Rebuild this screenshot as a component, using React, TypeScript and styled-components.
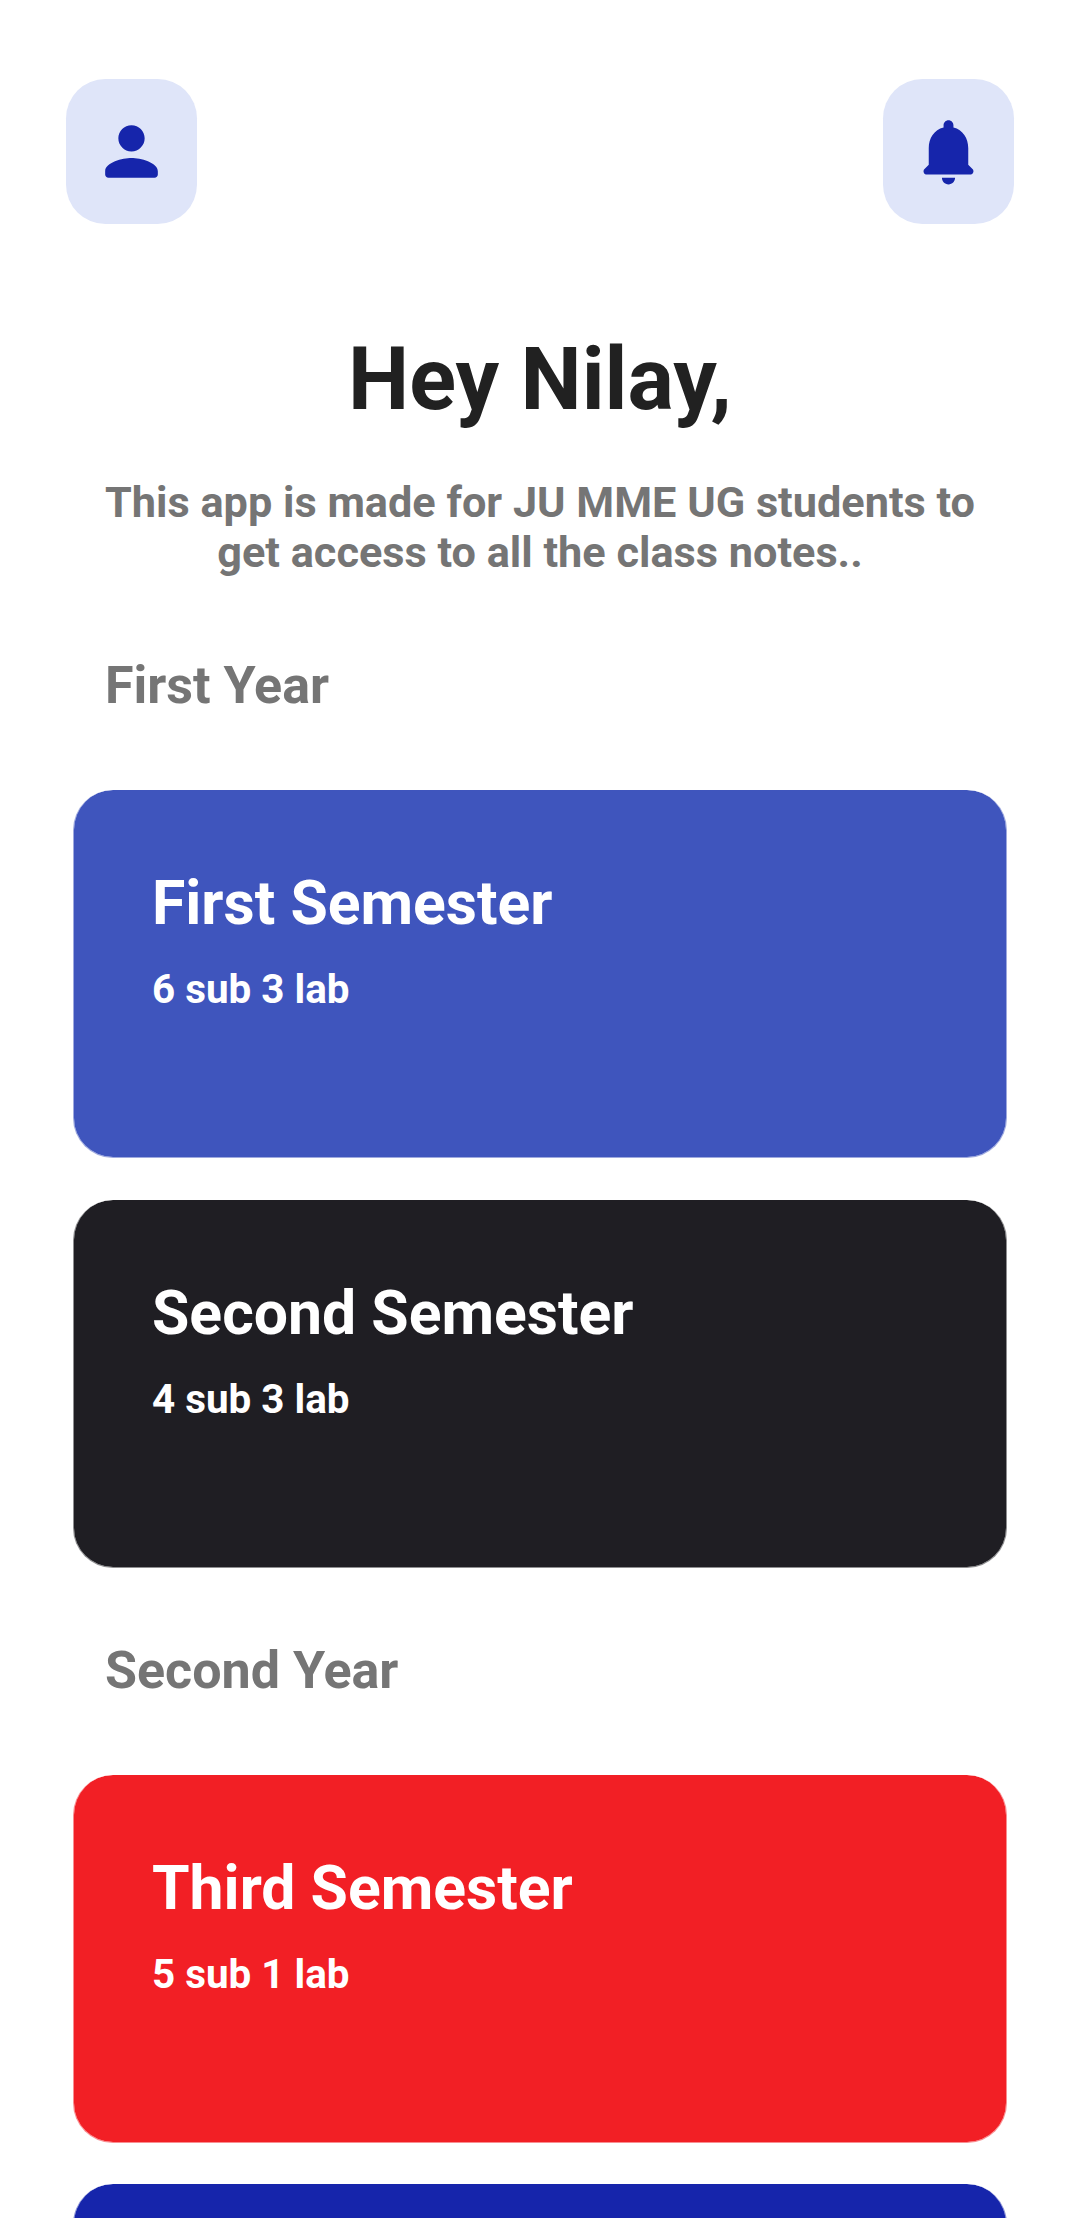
import React from 'react';
import styled, { createGlobalStyle } from 'styled-components';

const Global = createGlobalStyle`
  * { box-sizing: border-box; }
  body { margin: 0; background: #fff; font-family: Roboto, sans-serif; }
`;
const Screen = styled.main`
  width: 1080px;
  height: 2218px;
  overflow: hidden;
  display: flex;
  flex-direction: column;
  background: #fff;
`;
const TopBar = styled.header`
  display: flex;
  justify-content: space-between;
  padding: 79px 66px 0;
`;
const IconButton = styled.button`
  width: 131px;
  height: 145px;
  padding: 0;
  border: 0;
  border-radius: 39.4px;
  background: #dfe5f9;
  color: #1625ab;
  display: flex;
  align-items: center;
  justify-content: center;
`;
const Greeting = styled.h1`
  margin: 104px 0 0;
  font-size: 86.625px;
  line-height: 103px;
  font-weight: 700;
  color: #212121;
  text-align: center;
`;
const Intro = styled.p`
  margin: 47px 90px 0;
  font-size: 43.25px;
  line-height: 50px;
  font-weight: 700;
  color: #757575;
  text-align: center;
`;
const YearTitle = styled.h2<{ $top: number }>`
  margin: ${p => p.$top}px 0 0 105px;
  font-size: 52px;
  line-height: 62px;
  font-weight: 700;
  color: #757575;
`;
const Cards = styled.div<{ $gap: number }>`
  display: flex;
  flex-direction: column;
  gap: ${p => p.$gap}px;
  padding: 73px 73px 0;
`;
const Card = styled.section<{ $color: string }>`
  height: 368px;
  flex: none;
  border: 1px solid ${p => p.$color}80;
  border-top: 0;
  border-radius: 40px;
  background: ${p => p.$color};
  background-clip: padding-box;
  color: #fff;
  padding: 78px 78px 0;
`;
const CardTitle = styled.h3`
  margin: 0;
  font-size: 60.7px;
  line-height: 72px;
  font-weight: 700;
`;
const CardMeta = styled.p`
  margin: 26px 0 0;
  font-size: 40.4px;
  line-height: 48px;
  font-weight: 700;
`;

const years = [
  { title: 'First Year', top: 77, gap: 42, semesters: [
    { name: 'First Semester', meta: '6 sub 3 lab', color: '#3f55bd' },
    { name: 'Second Semester', meta: '4 sub 3 lab', color: '#1f1e23' },
  ] },
  { title: 'Second Year', top: 72, gap: 41, semesters: [
    { name: 'Third Semester', meta: '5 sub 1 lab', color: '#f21f25' },
    { name: '', meta: '', color: '#1625ab' },
  ] },
];

export default function App() {
  return (
    <Screen>
      <Global />
      <TopBar>
        <IconButton aria-label="Profile">
          <svg width="79" height="79" viewBox="0 0 24 24" fill="currentColor">
            <path d="M12 12c2.210 0 4-1.790 4-4s-1.790-4-4-4-4 1.790-4 4 1.790 4 4 4zm0 2c-2.670 0-8 1.340-8 4v1c0 .55.45 1 1 1h14c.55 0 1-.45 1-1v-1c0-2.660-5.330-4-8-4z" />
          </svg>
        </IconButton>
        <IconButton aria-label="Notifications">
          <svg width="79" height="79" viewBox="0 0 24 24" fill="currentColor">
            <path d="M12 22c1.100 0 2-.9 2-2h-4c0 1.100.89 2 2 2zm6-6v-5c0-3.070-1.640-5.640-4.500-6.320V4c0-.83-.67-1.500-1.500-1.500s-1.500.67-1.500 1.500v.68C7.630 5.360 6 7.920 6 11v5l-1.290 1.290c-.63.63-.19 1.710.7 1.710h13.170c.89 0 1.340-1.080.71-1.710L18 16z" />
          </svg>
        </IconButton>
      </TopBar>
      <Greeting>Hey Nilay,</Greeting>
      <Intro>This app is made for JU MME UG students to<br />get access to all the class notes..</Intro>
      {years.map(year => (
        <React.Fragment key={year.title}>
          <YearTitle $top={year.top}>{year.title}</YearTitle>
          <Cards $gap={year.gap}>
            {year.semesters.map(s => (
              <Card key={s.color} $color={s.color}>
                {s.name && <><CardTitle>{s.name}</CardTitle><CardMeta>{s.meta}</CardMeta></>}
              </Card>
            ))}
          </Cards>
        </React.Fragment>
      ))}
    </Screen>
  );
}
